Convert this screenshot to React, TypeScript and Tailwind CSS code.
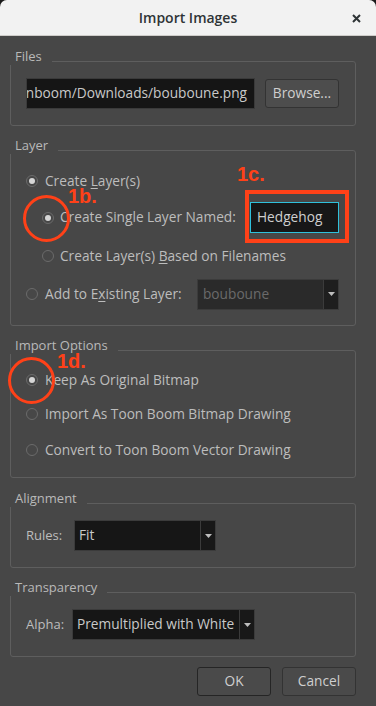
import React from "react";

const FONT = { fontFamily: '"Open Sans", "Noto Sans", sans-serif' };

function Radio({ checked }: { checked?: boolean }) {
  return (
    <span className="w-[12px] h-[12px] rounded-full border border-[#6b6b6b] bg-[#474747] flex items-center justify-center shrink-0">
      {checked && <span className="w-[6px] h-[6px] rounded-full bg-[#d6d6d6]" />}
    </span>
  );
}

function Group({ title, className, children }: { title: string; className?: string; children: React.ReactNode }) {
  return (
    <div className={`relative border border-[#5e5e5e] rounded-[3px] ${className ?? ""}`}>
      <span className="absolute -top-[15px] -left-[1px] bg-[#474747] pl-[5px] pr-[10px] text-[13px] leading-[18px] text-[#b9b9b9]">
        {title}
      </span>
      {children}
    </div>
  );
}

function Combo({ value, width, disabled }: { value: string; width: string; disabled?: boolean }) {
  return (
    <div className={`flex h-[31px] ${width} border border-[#3b3b3b] ${disabled ? "bg-[#2a2a2a]" : "bg-[#161616]"}`}>
      <div className={`flex-1 flex items-center whitespace-nowrap text-[13.7px] ${disabled ? "text-[#6a6a6a] pl-[5px]" : "text-[#c9c9c9] pl-[4px]"}`}>
        {value}
      </div>
      <div className={`w-[15px] flex items-center justify-center border-l border-[#3b3b3b] ${disabled ? "bg-[#1e1e1e]" : "bg-[#181818]"}`}>
        <svg width="7" height="4" viewBox="0 0 7 4">
          <path d="M0 0h7L3.5 4z" fill="#bdbdbd" />
        </svg>
      </div>
    </div>
  );
}

export default function App() {
  return (
    <div className="w-[376px] h-[706px] bg-[#1a1a1a] text-[#bdbdbd]" style={FONT}>
      <div className="relative w-full h-full flex flex-col bg-[#474747] rounded-t-[7px] overflow-hidden">
        {/* ─── TITLE BAR ─── */}
        <div className="h-[36px] shrink-0 bg-[#f2f2f2] border-b border-[#cfcdca] flex items-center justify-center relative">
          <span className="text-[14px] font-semibold text-[#2e3436]">Import Images</span>
          <svg className="absolute right-[15px] top-[14px]" width="9" height="9" viewBox="0 0 9 9">
            <path d="M1 1l7 7M8 1L1 8" stroke="#2e3436" strokeWidth="2" />
          </svg>
        </div>

        {/* ─── BODY ─── */}
        <div className="flex flex-col pl-[10px] pr-[20px] pt-[25px]">
          <Group title="Files">
            <div className="flex items-center pl-[15px] pr-[16px] pt-[16px] pb-[16px] gap-[10px]">
              <div className="w-[229px] h-[31px] bg-[#151515] border border-[#3a3a3a] flex items-center overflow-hidden whitespace-nowrap text-[13.7px] text-[#c9c9c9] justify-end pr-[7px]">
                nboom/Downloads/bouboune.png
              </div>
              <button className="w-[74px] h-[29px] bg-[#4d4d4d] border border-[#333333] rounded-[3px] text-[13.7px] text-[#cfcfcf]">
                Browse...
              </button>
            </div>
          </Group>

          <Group title="Layer" className="mt-[24px]">
            <div className="flex flex-col pt-[18px] pb-[16px] text-[13.7px] text-[#bdbdbd]">
              <div className="h-[24px] flex items-center pl-[15px] gap-[7px]">
                <Radio checked />
                <span>Create <u className="underline-offset-2">L</u>ayer(s)</span>
              </div>
              <div className="mt-[9px] h-[31px] flex items-center pl-[31px] gap-[6px]">
                <Radio checked />
                <span className="w-[184px] whitespace-nowrap">Create Sin<u className="underline-offset-2">g</u>le Layer Named:</span>
                <div className="w-[89px] h-[31px] bg-[#171717] border border-[#2fc1dc] flex items-center pl-[6px] text-[#cfcfcf]">
                  Hedgehog
                </div>
              </div>
              <div className="mt-[11px] h-[24px] flex items-center pl-[31px] gap-[6px]">
                <Radio />
                <span>Create Layer(s) <u className="underline-offset-2">B</u>ased on Filenames</span>
              </div>
              <div className="mt-[11px] h-[30px] flex items-center pl-[15px] gap-[7px]">
                <Radio />
                <span className="w-[145px] whitespace-nowrap">Add to E<u className="underline-offset-2">x</u>isting Layer:</span>
                <Combo value="bouboune" width="w-[142px]" disabled />
              </div>
            </div>
          </Group>

          <Group title="Import Options" className="mt-[24px]">
            <div className="flex flex-col pt-[17px] pb-[15px] text-[13.7px] text-[#bdbdbd]">
              <div className="h-[24px] flex items-center pl-[15px] gap-[7px]">
                <Radio checked />
                <span>Keep As Original Bitmap</span>
              </div>
              <div className="mt-[10px] h-[24px] flex items-center pl-[15px] gap-[7px]">
                <Radio />
                <span>Import As Toon Boom Bitmap Drawing</span>
              </div>
              <div className="mt-[12px] h-[24px] flex items-center pl-[15px] gap-[7px]">
                <Radio />
                <span>Convert to Toon Boom Vector Drawing</span>
              </div>
            </div>
          </Group>

          <Group title="Alignment" className="mt-[25px]">
            <div className="flex items-center pt-[16px] pb-[16px] pl-[15px] text-[13px]">
              <span className="w-[48px]">Rules:</span>
              <Combo value="Fit" width="w-[142px]" />
            </div>
          </Group>

          <Group title="Transparency" className="mt-[24px]">
            <div className="flex items-center pt-[16px] pb-[16px] pl-[15px] text-[13px]">
              <span className="w-[46px]">Alpha:</span>
              <Combo value="Premultiplied with White" width="w-[183px]" />
            </div>
          </Group>

          {/* ─── BUTTONS ─── */}
          <div className="flex justify-end gap-[11px] mt-[10px]">
            <button className="w-[74px] h-[29px] bg-[#4a4a4a] border border-[#252525] rounded-[3px] text-[13.7px] text-[#cfcfcf]">
              OK
            </button>
            <button className="w-[74px] h-[29px] bg-[#4a4a4a] border border-[#333333] rounded-[3px] text-[13.7px] text-[#cfcfcf]">
              Cancel
            </button>
          </div>
        </div>

        {/* ─── ANNOTATIONS ─── */}
        <div className="absolute left-[245px] top-[190px] w-[104px] h-[53px] border-4 border-[#ff4118]" />
        <div className="absolute left-[23px] top-[195px] w-[47px] h-[47px] rounded-full border-[3px] border-[#ff4118]" />
        <div className="absolute left-[8px] top-[357px] w-[47px] h-[47px] rounded-full border-[3px] border-[#ff4118]" />
        <span className="absolute left-[237px] top-[164px] text-[20px] leading-[20px] font-bold text-[#ff4118]" style={{ fontFamily: '"Liberation Sans", Arial, sans-serif' }}>1c.</span>
        <span className="absolute left-[68px] top-[186px] text-[20px] leading-[20px] font-bold text-[#ff4118]" style={{ fontFamily: '"Liberation Sans", Arial, sans-serif' }}>1b.</span>
        <span className="absolute left-[57px] top-[351px] text-[20px] leading-[20px] font-bold text-[#ff4118]" style={{ fontFamily: '"Liberation Sans", Arial, sans-serif' }}>1d.</span>
      </div>
    </div>
  );
}
